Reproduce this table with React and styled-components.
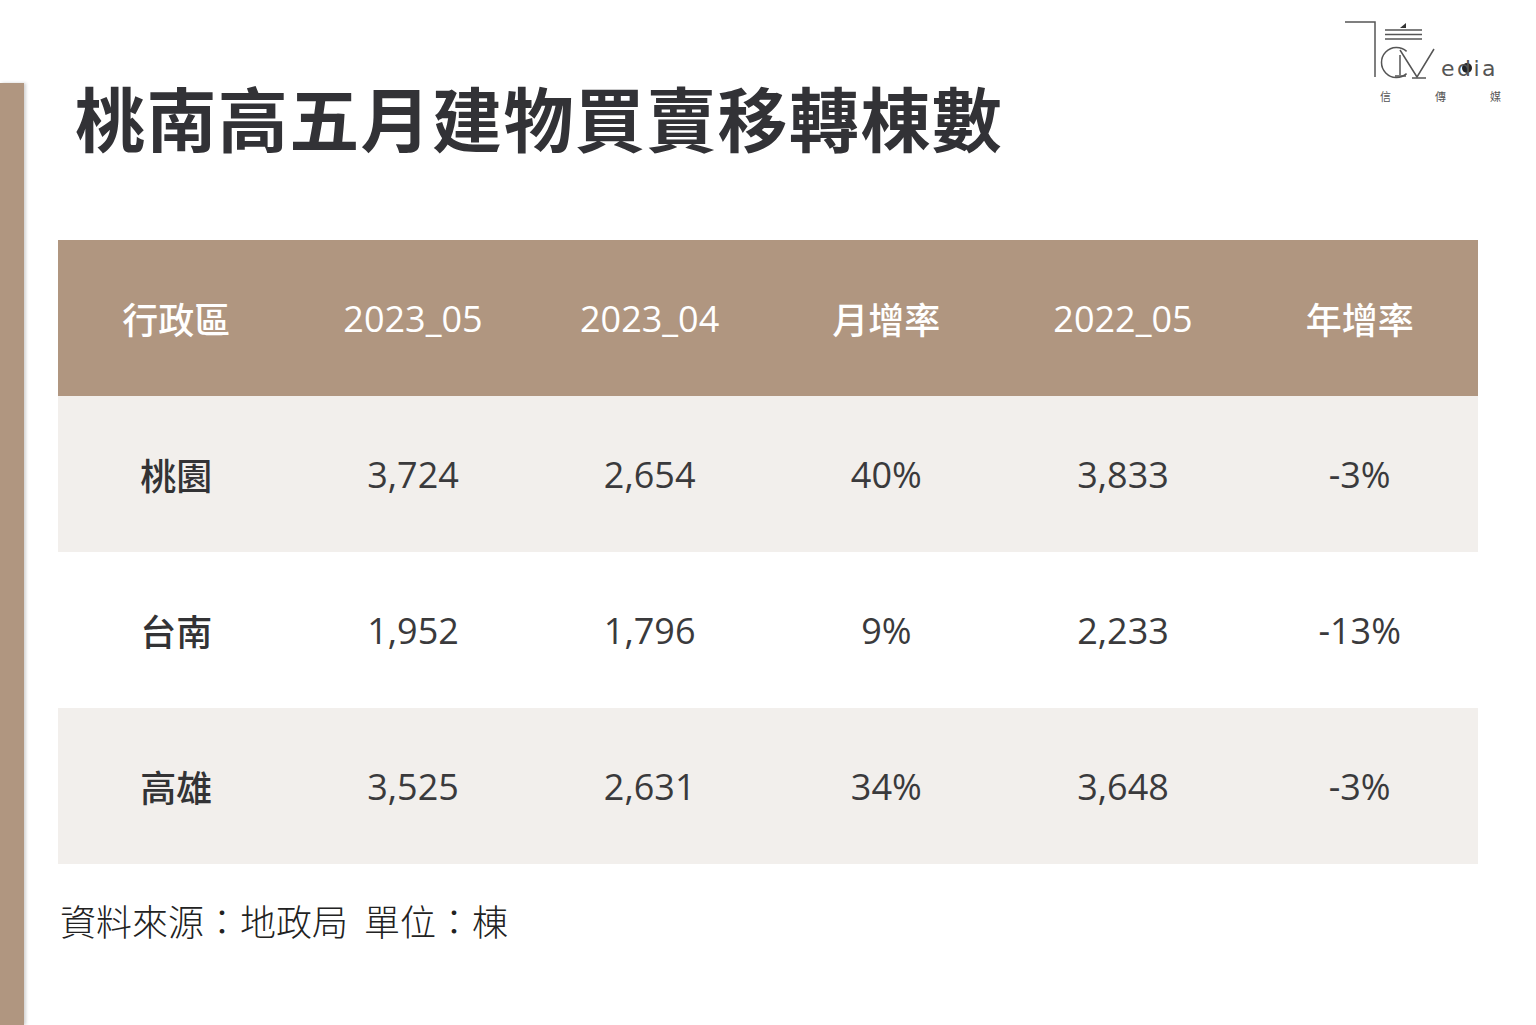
import styled, { createGlobalStyle } from "styled-components";

const GlobalStyle = createGlobalStyle`
  html, body {
    margin: 0;
    padding: 0;
    background: #ffffff;
  }
  body {
    font-family: "Open Sans", "Noto Sans CJK TC", sans-serif;
  }
`;

const rows = [
  { area: "桃園", cur: "3,724", prev: "2,654", mom: "40%", last: "3,833", yoy: "-3%" },
  { area: "台南", cur: "1,952", prev: "1,796", mom: "9%", last: "2,233", yoy: "-13%" },
  { area: "高雄", cur: "3,525", prev: "2,631", mom: "34%", last: "3,648", yoy: "-3%" },
];

const heads = ["行政區", "2023_05", "2023_04", "月增率", "2022_05", "年增率"];

const Page = styled.div`
  display: flex;
  min-height: 1025px;
  width: 1536px;
  overflow: hidden;
`;

const SideBar = styled.div`
  width: 24px;
  flex: none;
  margin-top: 83px;
  background: #b09680;
  box-shadow: 2px 0 3px rgba(0, 0, 0, 0.18);
`;

const Main = styled.div`
  flex: 1;
  display: flex;
  flex-direction: column;
  padding-left: 34px;
`;

const Header = styled.div`
  display: flex;
  justify-content: space-between;
  align-items: flex-start;
  height: 160px;
  margin-bottom: 80px;
`;

const Title = styled.h1`
  margin: 77px 0 0 17px;
  font-family: "Noto Sans CJK TC", sans-serif;
  font-size: 70px;
  font-weight: 700;
  line-height: 80px;
  letter-spacing: 1.4px;
  color: #323236;
`;

const Logo = styled.svg`
  margin: 15px 31px 0 0;
  width: 165px;
  height: 92px;
  flex: none;
`;

const Table = styled.div`
  width: 1420px;
  display: flex;
  flex-direction: column;
`;

const Row = styled.div`
  display: grid;
  grid-template-columns: repeat(6, 1fr);
  height: 156px;
  align-items: center;
  background: ${(p) => (p.head ? "#b09680" : p.shade ? "#f2efec" : "#ffffff")};
`;

const HeadCell = styled.div`
  text-align: center;
  color: #ffffff;
  font-size: 36px;
  font-weight: 500;
  font-family: "Open Sans", "Noto Sans CJK TC", sans-serif;
`;

const Cell = styled.div`
  text-align: center;
  color: #3a3a3c;
  font-size: 36px;
  font-family: "Open Sans", "Noto Sans CJK TC", sans-serif;
  font-weight: 400;
  ${(p) =>
    p.label &&
    `font-family: "Noto Sans CJK TC", sans-serif; font-weight: 500; color: #333335;`}
`;

const Footnote = styled.p`
  margin: 32px 0 0 2px;
  font-family: "Noto Sans CJK TC", sans-serif;
  font-weight: 300;
  font-size: 36px;
  line-height: 48px;
  word-spacing: 8px;
  color: #222222;
`;

const BrandLogo = () => (
  <Logo viewBox="0 0 165 92">
    <g stroke="#555" strokeWidth="1.5" fill="none">
      <path d="M5 7 H35 V62" />
      <path d="M45 15 H82 M45 19.5 H82 M45 24 H82" />
      <path d="M66.6 36.4 A15 15 0 1 0 66.6 58.6" />
      <path d="M60 35 L77 62 L94 34" />
      <path d="M60 40 V60 M55 61 H66" />
      <path d="M72 63 H86" />
    </g>
    <polygon points="60,13 66,8 66,13" fill="#333" />
    <circle cx="127" cy="53" r="5" fill="#222" />
    <text x="101" y="61" fontFamily="'DejaVu Sans', sans-serif" fontSize="22" fill="#555" letterSpacing="2.5">
      edia
    </text>
    <g fontFamily="'Noto Sans CJK TC', serif" fontSize="11" fill="#555">
      <text x="40" y="86">信</text>
      <text x="95" y="86">傳</text>
      <text x="150" y="86">媒</text>
    </g>
  </Logo>
);

export default function App() {
  return (
    <>
      <GlobalStyle />
      <Page>
        <SideBar />
        <Main>
          <Header>
            <Title>桃南高五月建物買賣移轉棟數</Title>
            <BrandLogo />
          </Header>
          <Table>
            <Row head>
              {heads.map((h) => (
                <HeadCell key={h}>{h}</HeadCell>
              ))}
            </Row>
            {rows.map((r, i) => (
              <Row key={r.area} shade={i % 2 === 0}>
                <Cell label>{r.area}</Cell>
                <Cell>{r.cur}</Cell>
                <Cell>{r.prev}</Cell>
                <Cell>{r.mom}</Cell>
                <Cell>{r.last}</Cell>
                <Cell>{r.yoy}</Cell>
              </Row>
            ))}
          </Table>
          <Footnote>資料來源：地政局 單位：棟</Footnote>
        </Main>
      </Page>
    </>
  );
}
